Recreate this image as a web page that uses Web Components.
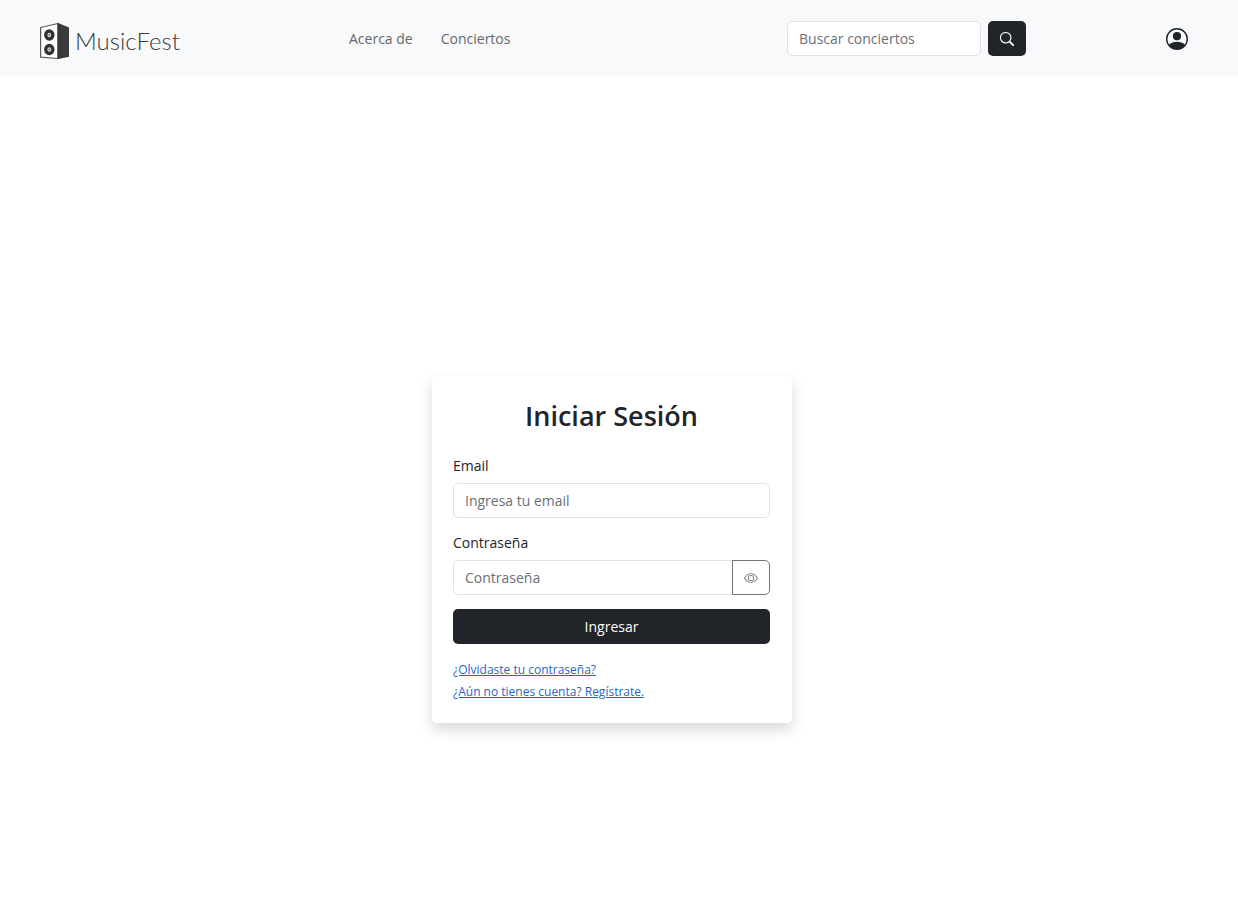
<!DOCTYPE html>
<html lang="es">
<head>
<meta charset="utf-8">
<meta name="viewport" content="width=device-width, initial-scale=1">
<title>MusicFest - Iniciar Sesión</title>
<style>
  body { margin: 0; font: 400 14px/21px "Open Sans", "Noto Sans", sans-serif; color: #212529; background: #fff; }
</style>
</head>
<body>
<mf-app></mf-app>
<script>
const base = `
  *, *::before, *::after { box-sizing: border-box; }
  button { font: inherit; cursor: pointer; padding: 0; display: grid; place-items: center; }
  input { font: inherit; color: inherit; height: 35px; min-width: 0; padding: 0 11px; background: #fff; border: 1px solid #dee2e6; border-radius: 5px; }
  input::placeholder { color: #6c7073; opacity: 1; }
  svg { display: block; }
`;
const define = (name, html) => {
  const template = document.createElement('template');
  template.innerHTML = html;
  customElements.define(name, class extends HTMLElement {
    constructor() {
      super();
      this.attachShadow({ mode: 'open' }).append(template.content.cloneNode(true));
    }
  });
};

define('mf-logo', `
  <style>${base}
    :host { display: block; }
    a { display: flex; align-items: center; gap: 5px; color: #3a3a3c; text-decoration: none; }
    span { font: 300 24px/38px Lato, sans-serif; }
  </style>
  <a href="#" aria-label="MusicFest">
    <svg width="32" height="38" viewBox="0 0 32 38" aria-hidden="true">
      <path d="M2.600 5.500 20 1.500v35L2.600 35.200z" fill="#fff" stroke="#58585a" stroke-width="1.2" stroke-linejoin="round"/>
      <path d="M19.500 .8 31 5.500v29.300L19.500 37.300z" fill="#3a3a3c"/>
      <g fill="#303032"><ellipse cx="11.300" cy="13" rx="5.200" ry="5.800"/><ellipse cx="11.300" cy="27.500" rx="5.200" ry="5.800"/></g>
      <g fill="#ddd"><ellipse cx="11.300" cy="13" rx="1.900" ry="2.300"/><ellipse cx="11.300" cy="27.500" rx="1.900" ry="2.300"/></g>
      <g fill="#77777a"><circle cx="11.300" cy="13" r="1"/><circle cx="11.300" cy="27.500" r="1"/></g>
    </svg>
    <span>MusicFest</span>
  </a>`);

define('mf-nav', `
  <style>${base}
    nav { display: flex; gap: 28px; }
    a { color: #666769; text-decoration: none; }
  </style>
  <nav><a href="#">Acerca de</a><a href="#">Conciertos</a></nav>`);

define('mf-search', `
  <style>${base}
    form { display: flex; gap: 7px; }
    input { width: 194px; }
    button { width: 38px; height: 35px; border: 0; border-radius: 5px; background: #212529; color: #fff; }
  </style>
  <form role="search">
    <input type="search" placeholder="Buscar conciertos" aria-label="Buscar conciertos">
    <button type="button" aria-label="Buscar">
      <svg width="14" height="14" viewBox="0 0 16 16" fill="currentColor" stroke="currentColor" stroke-width=".3"><path d="M11.742 10.344a6.5 6.5 0 1 0-1.397 1.398h-.001q.044.06.098.115l3.85 3.85a1 1 0 0 0 1.415-1.414l-3.85-3.85a1 1 0 0 0-.115-.1zM12 6.5a5.5 5.5 0 1 1-11 0 5.5 5.5 0 0 1 11 0"/></svg>
    </button>
  </form>`);

define('mf-header', `
  <style>${base}
    :host { display: block; background: #f8f9fa; }
    header { display: grid; grid-template-columns: 311fr 438fr 379fr auto; align-items: center; min-height: 77px; padding: 0 50px 0 38px; }
    mf-logo { padding-top: 4px; }
    button { width: 22px; height: 22px; border: 0; background: none; color: #212529; }
  </style>
  <header>
    <mf-logo></mf-logo><mf-nav></mf-nav><mf-search></mf-search>
    <button type="button" aria-label="Cuenta">
      <svg width="22" height="22" viewBox="0 0 22 22"><defs><clipPath id="c"><circle cx="11" cy="11" r="10.5"/></clipPath></defs><circle cx="11" cy="11" r="10.3" fill="none" stroke="currentColor" stroke-width="1.4"/><circle cx="11" cy="8.2" r="4.1" fill="currentColor"/><path d="M2.5 17.5Q5 13.8 11 13.8t8.500 3.700Q16 22 11 22T2.500 17.500" fill="currentColor" clip-path="url(#c)"/></svg>
    </button>
  </header>`);

define('mf-field', `
  <style>:host { display: grid; gap: 7px; }</style>
  <slot name="label"></slot><slot></slot>`);

define('mf-login', `
  <style>${base}
    :host { display: block; width: 360px; max-width: 100%; padding: 21px 22px 21px 21px; background: #fff; border-radius: 5px; box-shadow: 0 7px 14px rgba(0,0,0,.15); }
    h1 { margin: 0 0 20px; font-size: 27px; line-height: 38px; font-weight: 600; text-align: center; }
    form { display: grid; gap: 14px; }
    input { width: 100%; }
    .group { display: flex; }
    .group input { flex: 1; border-right: 0; border-radius: 5px 0 0 5px; }
    .group button { width: 38px; height: 35px; color: #6c757d; background: #fff; border: 1px solid #6c757d; border-radius: 0 5px 5px 0; }
    .submit { height: 35px; border: 0; border-radius: 5px; background: #212529; color: #fff; font-weight: 500; }
    .links { display: grid; justify-items: start; gap: 1px; margin-top: 15px; font-size: 12px; }
    .links a { color: #1f66c9; }
  </style>
  <h1>Iniciar Sesión</h1>
  <form>
    <mf-field><label slot="label" for="email">Email</label><input id="email" type="email" placeholder="Ingresa tu email"></mf-field>
    <mf-field><label slot="label" for="password">Contraseña</label>
      <div class="group"><input id="password" type="password" placeholder="Contraseña">
        <button type="button" aria-label="Mostrar contraseña"><svg width="14" height="14" viewBox="0 0 16 16" fill="currentColor"><path d="M16 8s-3-5.500-8-5.500S0 8 0 8s3 5.500 8 5.500S16 8 16 8M1.173 8a13 13 0 0 1 1.660-2.043C4.120 4.668 5.880 3.500 8 3.500s3.879 1.168 5.168 2.457A13 13 0 0 1 14.828 8q-.086.130-.195.288c-.335.480-.830 1.120-1.465 1.755C11.879 11.332 10.119 12.500 8 12.500s-3.879-1.168-5.168-2.457A13 13 0 0 1 1.172 8z"/><path d="M8 5.500a2.500 2.500 0 1 0 0 5 2.500 2.500 0 0 0 0-5M4.500 8a3.500 3.500 0 1 1 7 0 3.500 3.500 0 0 1-7 0"/></svg></button>
      </div></mf-field>
    <button class="submit" type="button">Ingresar</button>
  </form>
  <div class="links"><a href="#">¿Olvidaste tu contraseña?</a><a href="#">¿Aún no tienes cuenta? Regístrate.</a></div>`);

define('mf-app', `
  <style>${base}
    :host { display: flex; flex-direction: column; min-height: 100vh; }
    main { flex: 1; display: grid; place-items: center; padding: 115px 14px 0 0; }
  </style>
  <mf-header></mf-header>
  <main><mf-login></mf-login></main>`);
</script>
</body>
</html>
